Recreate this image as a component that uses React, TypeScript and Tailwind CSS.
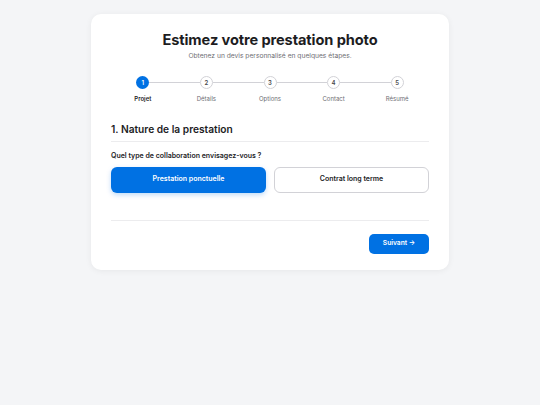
const steps = ["Projet", "Détails", "Options", "Contact", "Résumé"];

export default function App() {
  const current = 0;

  return (
    <main
      className="min-h-screen bg-[#f4f5f7] pt-[14px] text-[#1d1d1f]"
      style={{ fontFamily: "Inter, 'Liberation Sans', sans-serif" }}
    >
      <div className="mx-auto w-[358px] rounded-[10px] bg-white px-5 pt-[16px] pb-4 shadow-[0_1px_6px_rgba(0,0,0,0.06)]">
        <header className="flex flex-col items-center">
          <h1 className="text-[14.6px] leading-[20px] font-bold tracking-[-0.1px]">
            Estimez votre prestation photo
          </h1>
          <p className="text-[6.7px] leading-[12px] text-[#6e6e73]">
            Obtenez un devis personnalisé en quelques étapes.
          </p>
        </header>

        <ol className="mt-[14px] grid grid-cols-5">
          {steps.map((label, i) => (
            <li key={label} className="flex flex-col items-center">
              <div className="flex w-full items-center">
                <span
                  className={[
                    "h-px flex-1",
                    i === 0 ? "bg-transparent" : "bg-[#d2d2d7]",
                  ].join(" ")}
                />
                <span
                  className={[
                    "flex h-[13px] w-[13px] items-center justify-center rounded-full text-[6px] font-semibold",
                    i === current
                      ? "bg-[#0071e3] text-white"
                      : "border border-[#d2d2d7] bg-white text-[#48484a]",
                  ].join(" ")}
                >
                  {i + 1}
                </span>
                <span
                  className={[
                    "h-px flex-1",
                    i === steps.length - 1 ? "bg-transparent" : "bg-[#d2d2d7]",
                  ].join(" ")}
                />
              </div>
              <span
                className={[
                  "mt-[4.5px] text-[6px] leading-[10px]",
                  i === current ? "font-semibold text-[#1d1d1f]" : "text-[#6e6e73]",
                ].join(" ")}
              >
                {label}
              </span>
            </li>
          ))}
        </ol>

        <section className="mt-[17px]">
          <h2 className="border-b border-[#ececee] pb-[4px] text-[10.2px] leading-[16px] font-semibold">
            1. Nature de la prestation
          </h2>
          <p className="mt-[8px] text-[7px] leading-[12px] font-semibold">
            Quel type de collaboration envisagez-vous ?
          </p>
          <div className="mt-[5px] grid grid-cols-2 gap-2">
            <button
              type="button"
              className="h-[26px] rounded-[6px] bg-[#0071e3] text-[7px] font-semibold text-white shadow-[0_2px_5px_rgba(0,113,227,0.25)]"
            >
              Prestation ponctuelle
            </button>
            <button
              type="button"
              className="h-[26px] rounded-[6px] border border-[#d2d2d7] bg-white text-[7px] font-semibold text-[#1d1d1f]"
            >
              Contrat long terme
            </button>
          </div>
        </section>

        <footer className="mt-[27px] flex justify-end border-t border-[#ececee] pt-[13px]">
          <button
            type="button"
            className="h-[20px] w-[60px] rounded-[5px] bg-[#0071e3] text-[6.7px] font-semibold text-white"
          >
            Suivant →
          </button>
        </footer>
      </div>
    </main>
  );
}
